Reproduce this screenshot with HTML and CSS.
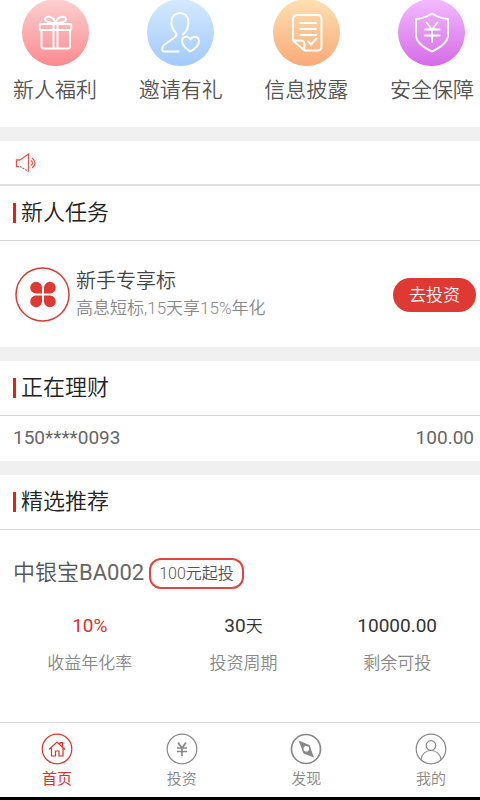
FILE: index.html
```html
<!DOCTYPE html>
<html lang="zh-CN">
<head>
<meta charset="utf-8">
<meta name="viewport" content="width=device-width, initial-scale=1">
<title>首页</title>
<link rel="stylesheet" href="styles.css">
</head>
<body>
<main>
  <nav class="shortcuts">
    <a class="shortcut" href="#gift">
      <svg class="shortcut-icon" viewBox="0 0 67 67" aria-hidden="true">
        <defs><linearGradient id="pink" x2="0" y2="1"><stop stop-color="#fdd0d1"/><stop offset="1" stop-color="#fb8a8f"/></linearGradient></defs>
        <circle cx="33.5" cy="33.5" r="33.5" fill="url(#pink)"/>
        <g class="line">
          <rect x="17.700" y="25" width="31.500" height="6" rx="1"/>
          <path d="M19.500 31v16.500q0 2 2 2h24.500q2 0 2-2V31M31.500 25v24.500M35.500 25v24.500M33.500 24.500c-4-1-10-1-10.500-4-.4-4 8.500-4.500 10.500 4 2-8.500 10.900-8 10.500-4-.5 3-6.500 3-10.500 4"/>
        </g>
      </svg>
      <span>新人福利</span>
    </a>
    <a class="shortcut" href="#invite">
      <svg class="shortcut-icon" viewBox="0 0 67 67" aria-hidden="true">
        <defs><linearGradient id="blue" x2="0" y2="1"><stop stop-color="#d5e9ff"/><stop offset="1" stop-color="#a1cafb"/></linearGradient></defs>
        <circle cx="33.5" cy="33.5" r="33.5" fill="url(#blue)"/>
        <g class="line">
          <path d="M36 35.500C40 32 41.500 27 41.500 23.500 41.500 17.500 38 14 33 14s-8.700 3.500-8.700 9.500c0 4.500 2 7.500 4.200 10 1.500 2 1 3.500-1 5L17 46c-2 1.500-2.500 6.500 0 6.500h14.500"/>
          <path d="M43.500 52.500c-4-2.500-8.500-6-8.500-10.500 0-5 6-5.500 8.500-1.500 2.500-4 8.500-3.500 8.500 1.500 0 4.500-4.500 8-8.500 10.500z"/>
        </g>
      </svg>
      <span>邀请有礼</span>
    </a>
    <a class="shortcut" href="#info">
      <svg class="shortcut-icon" viewBox="0 0 67 67" aria-hidden="true">
        <defs><linearGradient id="orange" x2="0" y2="1"><stop stop-color="#fde0b2"/><stop offset="1" stop-color="#faa978"/></linearGradient></defs>
        <circle cx="33.500" cy="33.500" r="33.500" fill="url(#orange)"/>
        <g class="line">
          <path d="M20 41.500V20.500q0-4.500 4.500-4.500h20q4 0 4 4.500v27q0 4-4 4H31.500L20 41.500h7.500q4 0 4 4v6"/>
          <path d="M27.500 24H43M27.500 30H43M27.500 36H43M35 42.500l3 3 5.500-6"/>
        </g>
      </svg>
      <span>信息披露</span>
    </a>
    <a class="shortcut" href="#safe">
      <svg class="shortcut-icon" viewBox="0 0 67 67" aria-hidden="true">
        <defs><linearGradient id="purple" x2="0" y2="1"><stop stop-color="#f3baff"/><stop offset="1" stop-color="#d56be6"/></linearGradient></defs>
        <circle cx="33.500" cy="33.500" r="33.500" fill="url(#purple)"/>
        <g class="line">
          <path d="M34 14.500c4.500 3 10 5 16 5.500v16c0 8-8.500 13-16 16.500C26.500 49 18 44 18 36V20c6-.5 11.500-2.500 16-5.500z"/>
          <path d="M28.500 23.500l5.500 7 5.500-7M34 30.500V43M27 30.500h14.500M27 36.500h14.500"/>
        </g>
      </svg>
      <span>安全保障</span>
    </a>
  </nav>

  <section class="group">
    <div class="notice">
      <svg class="speaker" viewBox="0 0 22 20" aria-label="公告" role="img">
        <path d="M5 7L13.500 1V18.500M5 7H1.500v6.500H4"/>
        <path d="M5 13.500l8.500 5" stroke-dasharray="2 1"/>
        <path d="M16 7.500q3 2.500 0 5M17 5q6 5 0 10"/>
      </svg>
    </div>
    <h2 class="title">新人任务</h2>
    <div class="task">
      <svg class="task-icon" viewBox="0 0 56 56" aria-hidden="true">
        <circle cx="28.500" cy="27.500" r="26.500" fill="none" stroke="#de3a33" stroke-width="1.500"/>
        <path fill="#de3a33" d="M28 26.500H22a5.900 5.900 0 1 1 6-6zM30 26.500v-6a5.900 5.900 0 1 1 6 6zM28 28.500v6a5.900 5.900 0 1 1-6-6zM30 28.500h6a5.900 5.900 0 1 1-6 6z"/>
      </svg>
      <div class="task-text">
        <h3>新手专享标</h3>
        <p>高息短标,15天享15%年化</p>
      </div>
      <button class="invest" type="button">去投资</button>
    </div>
  </section>

  <section class="group">
    <h2 class="title">正在理财</h2>
    <div class="record"><span>150****0093</span><span>100.00</span></div>
  </section>

  <section class="group">
    <h2 class="title">精选推荐</h2>
    <div class="product">
      <div class="product-head">
        <h3>中银宝<span class="code">BA002</span></h3>
        <span class="tag">100元起投</span>
      </div>
      <dl class="metrics">
        <div><dt>收益年化率</dt><dd class="rate">10%</dd></div>
        <div><dt>投资周期</dt><dd>30<small>天</small></dd></div>
        <div><dt>剩余可投</dt><dd>10000.00</dd></div>
      </dl>
    </div>
  </section>
</main>

<nav class="tabs">
  <a class="tab active" href="#home">
    <svg viewBox="0 0 32 32" aria-hidden="true"><circle cx="16" cy="16" r="14.800"/><path d="M8 16.500l8-7.500 8 7.500M10.500 15v8h4v-5h3.500v5h4v-8M19 11V9.500h2.500V14"/></svg>
    <span>首页</span>
  </a>
  <a class="tab" href="#invest">
    <svg viewBox="0 0 32 32" aria-hidden="true"><circle cx="16" cy="16" r="14.800"/><path stroke-width="1.700" d="M12 9.500l4 5.500 4-5.500M16 15v8M11 15h10M11 18.500h10"/></svg>
    <span>投资</span>
  </a>
  <a class="tab" href="#discover">
    <svg viewBox="0 0 32 32" aria-hidden="true"><circle cx="16" cy="16" r="14.500" stroke-width="1.700"/><path fill="currentColor" stroke="none" d="M8.500 7.500L19.500 12 21 16.500 24 24.500 13.500 20.500 11.500 15z"/><circle cx="16.300" cy="15.800" r="3.400" fill="#fff"/></svg>
    <span>发现</span>
  </a>
  <a class="tab" href="#mine">
    <svg viewBox="0 0 32 32" aria-hidden="true"><circle cx="16" cy="16" r="14.800"/><circle cx="16" cy="12.500" r="4.800"/><path d="M6 26.500c1-5.500 5-9 10-9s9 3.500 10 9"/></svg>
    <span>我的</span>
  </a>
</nav>
</body>
</html>
```
FILE: styles.css
```css
* {
  box-sizing: border-box;
}

body {
  margin: 0;
  min-height: 100vh;
  display: flex;
  flex-direction: column;
  background: #fff;
  border-bottom: 3px solid #000;
  color: #555;
  font-family: Roboto, "Noto Sans CJK SC", sans-serif;
  font-weight: 350;
}

h2, h3, p, dl, dd {
  margin: 0;
  font-weight: inherit;
}

a {
  color: inherit;
  text-decoration: none;
}

.shortcuts {
  display: flex;
  justify-content: space-between;
  padding: 0 6px 22px 13px;
  font-size: 21px;
  line-height: 30px;
}

.shortcut {
  display: flex;
  flex-direction: column;
  align-items: center;
  gap: 9px;
}

.shortcut-icon {
  width: 67px;
  height: 67px;
  margin-top: -1px;
}

.line {
  fill: none;
  stroke: #fff;
  stroke-width: 2;
  stroke-linecap: round;
  stroke-linejoin: round;
}

.group {
  border-top: 14px solid #f0f0f0;
}

.notice {
  display: flex;
  align-items: center;
  height: 45px;
  padding: 0 15px;
  border-bottom: 2px solid #e0e0e4;
}

.speaker {
  width: 22px;
  height: 20px;
  fill: none;
  stroke: #e6574f;
  stroke-width: 1.3;
}

.title {
  display: flex;
  align-items: center;
  gap: 5px;
  height: 55px;
  padding: 0 13px;
  border-bottom: 1px solid #d6d6da;
  color: #222;
  font-size: 22px;
  line-height: 32px;
}

.title::before {
  content: "";
  width: 3px;
  height: 20px;
  background: #e5201b;
}

.task {
  display: flex;
  align-items: center;
  height: 106px;
  padding: 1px 4px 0 14px;
}

.task-icon {
  flex: none;
  width: 56px;
  height: 56px;
}

.task-text {
  flex: 1;
  margin-left: 6px;
  line-height: 27px;
}

.task-text h3 {
  color: #444;
  font-size: 20px;
}

.task-text p {
  color: #888;
  font-size: 17px;
}

.invest {
  width: 83px;
  height: 34px;
  padding: 0 0 2px;
  border: 0;
  border-radius: 17px;
  background: #de3a33;
  color: #fff;
  font: inherit;
  font-size: 17px;
}

.record {
  display: flex;
  justify-content: space-between;
  padding: 0 6px 1px 13px;
  color: #666;
  font-size: 19px;
  font-weight: 400;
  line-height: 44px;
}

.product {
  padding: 27px 6px 38px 13px;
}

.product-head {
  display: flex;
  align-items: center;
  gap: 5px;
}

.product-head h3 {
  font-size: 22px;
  line-height: 32px;
}

.code {
  color: #666;
  font-weight: 400;
}

.tag {
  padding: 0 8px;
  border: 2px solid #e2453e;
  border-radius: 12px;
  font-size: 16px;
  line-height: 27px;
}

.metrics {
  display: grid;
  grid-template-columns: repeat(3, 1fr);
  margin-top: 21px;
  text-align: center;
}

.metrics div {
  display: flex;
  flex-direction: column-reverse;
  gap: 5px;
}

.metrics dt {
  color: #888;
  font-size: 17px;
  line-height: 32px;
}

.metrics dd {
  color: #333;
  font-size: 19px;
  font-weight: 400;
  line-height: 32px;
}

.metrics small {
  font-size: 17px;
  font-weight: 350;
}

.metrics .rate {
  color: #e0302a;
}

.tabs {
  display: flex;
  justify-content: space-between;
  height: 75px;
  margin-top: auto;
  padding: 10px 33px 0 41px;
  border-top: 1px solid #d6d6dc;
  color: #888;
  font-size: 15px;
  line-height: 28px;
}

.tab {
  display: flex;
  flex-direction: column;
  align-items: center;
}

.tab svg {
  width: 32px;
  height: 32px;
  fill: none;
  stroke: currentColor;
  stroke-width: 1.2;
}

.active {
  color: #e0302a;
  font-weight: 400;
}
```
